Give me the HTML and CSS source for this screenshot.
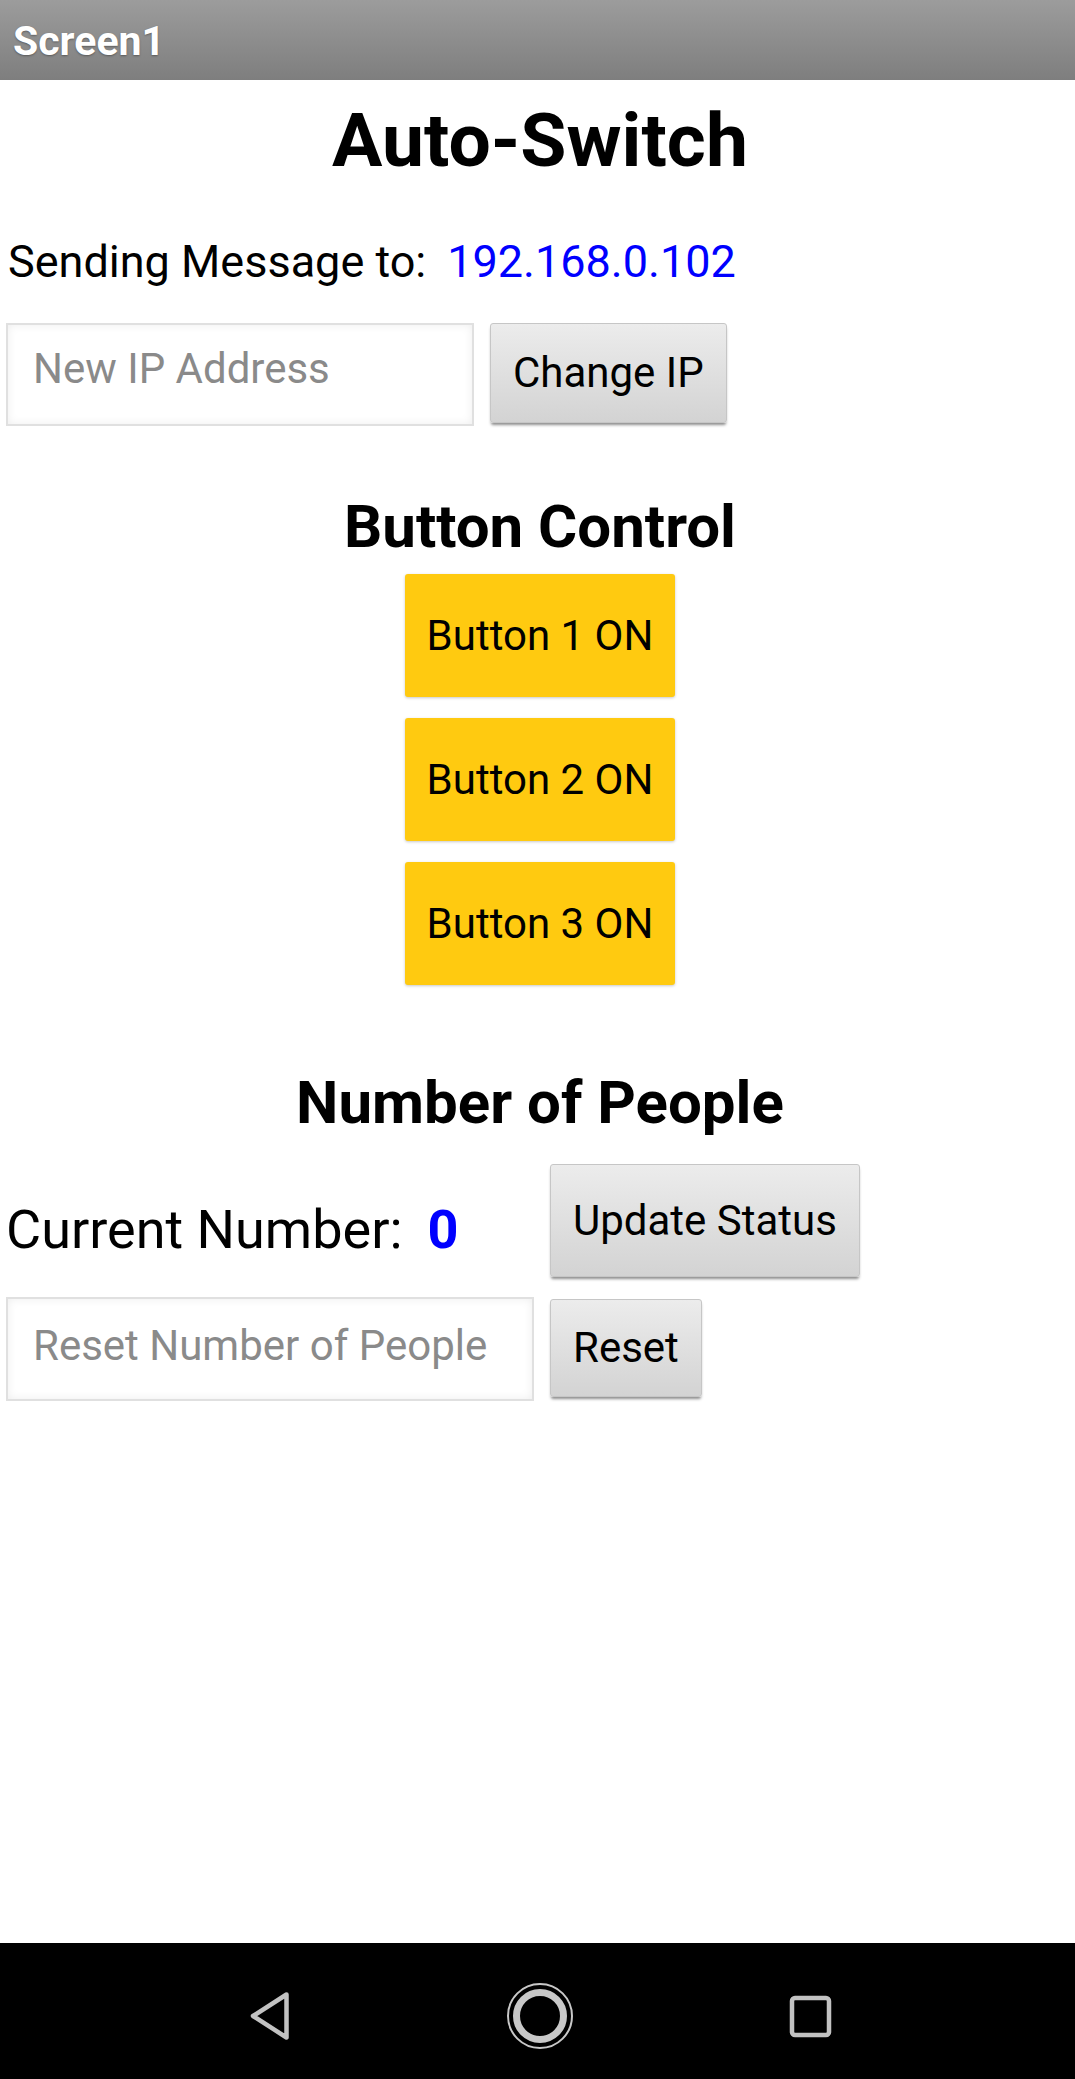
FILE: index.html
```html
<!DOCTYPE html>
<html lang="en">
<head>
<meta charset="utf-8">
<title>Screen1</title>
<link rel="stylesheet" href="styles.css">
</head>
<body>
<div class="screen">
  <header class="titlebar"><span class="titlebar-text">Screen1</span></header>
  <main class="content">
    <h1 class="title">Auto-Switch</h1>
    <div class="send-row">
      <span class="send-label">Sending Message to:</span>
      <span class="ip">192.168.0.102</span>
    </div>
    <div class="input-row ip-row">
      <input class="textbox tb-ip" type="text" placeholder="New IP Address">
      <button class="gray-btn btn-change">Change IP</button>
    </div>
    <h2 class="section section-control">Button Control</h2>
    <div class="yellow-stack">
      <button class="yellow-btn">Button 1 ON</button>
      <button class="yellow-btn">Button 2 ON</button>
      <button class="yellow-btn">Button 3 ON</button>
    </div>
    <h2 class="section section-people">Number of People</h2>
    <div class="count-row">
      <div class="count-label"><span class="count-text">Current Number:</span><span class="count">0</span></div>
      <button class="gray-btn btn-update">Update Status</button>
    </div>
    <div class="input-row reset-row">
      <input class="textbox tb-reset" type="text" placeholder="Reset Number of People">
      <button class="gray-btn btn-reset">Reset</button>
    </div>
    <div class="spacer"></div>
  </main>
  <nav class="navbar">
    <div class="nav-cell">
      <svg class="nav-icon" width="60" height="60" viewBox="0 0 60 60">
        <path d="M46.5 8.5 L13 30 L46.5 51.5 Z" fill="none" stroke="#c2c2c2" stroke-width="4.5" stroke-linejoin="round"/>
      </svg>
    </div>
    <div class="nav-cell">
      <svg class="nav-icon" width="72" height="72" viewBox="0 0 72 72">
        <circle cx="36" cy="36" r="32" fill="none" stroke="#c8c8c8" stroke-width="2"/>
        <circle cx="36" cy="36" r="23.5" fill="none" stroke="#c8c8c8" stroke-width="7"/>
      </svg>
    </div>
    <div class="nav-cell">
      <svg class="nav-icon" width="60" height="60" viewBox="0 0 60 60">
        <rect x="12" y="12" width="37" height="37" rx="3" fill="none" stroke="#c2c2c2" stroke-width="4.5"/>
      </svg>
    </div>
  </nav>
</div>
</body>
</html>
```

FILE: styles.css
```css
html, body {
  margin: 0;
  padding: 0;
  background: #ffffff;
}

body {
  font-family: Roboto, "Liberation Sans", Arial, sans-serif;
  color: #000000;
}

.screen {
  display: flex;
  flex-direction: column;
  min-height: 2079px;
  width: 1075px;
}

.titlebar {
  height: 80px;
  display: flex;
  align-items: center;
  padding-left: 13px;
  background: linear-gradient(to bottom, #9c9c9c 0%, #7e7e7e 100%);
  box-sizing: border-box;
}

.titlebar-text {
  color: #ffffff;
  font-size: 41px;
  font-weight: 700;
  line-height: 48px;
  text-shadow: 0 1px 2px rgba(0, 0, 0, 0.35);
  margin-top: 2px;
}

.content {
  flex: 1;
  display: flex;
  flex-direction: column;
  padding: 0 1px 0 6px;
}

.title {
  margin: 16px 0 0;
  font-size: 75px;
  font-weight: 700;
  line-height: 88px;
  text-align: center;
}

.send-row {
  margin-top: 52px;
  display: flex;
  align-items: baseline;
  font-size: 45px;
  line-height: 52px;
  padding-left: 2px;
}

.ip {
  color: #0000ff;
  margin-left: 21px;
}

.input-row {
  display: flex;
  align-items: flex-start;
}

.ip-row {
  margin-top: 35px;
}

.textbox {
  box-sizing: border-box;
  border: 2px solid #e0e0e0;
  background: #ffffff;
  box-shadow: inset 0 0 10px rgba(0, 0, 0, 0.07);
  font-family: Roboto, "Liberation Sans", Arial, sans-serif;
  font-size: 42px;
  color: #000;
  padding: 0 0 0 25px;
  margin: 0;
  outline: none;
  border-radius: 0;
}

.textbox::placeholder {
  color: #8a8a8a;
  opacity: 1;
}

.tb-ip {
  width: 468px;
  height: 103px;
  padding-bottom: 12px;
}

.tb-reset {
  width: 528px;
  height: 104px;
  padding-bottom: 7px;
}

.gray-btn {
  font-family: Roboto, "Liberation Sans", Arial, sans-serif;
  font-size: 42px;
  color: #000000;
  background: linear-gradient(to bottom, #ececec 0%, #d3d3d3 100%);
  border: 1px solid #c6c6c6;
  border-radius: 3px;
  box-shadow: 0 3px 3px -1px rgba(0, 0, 0, 0.45);
  padding: 0 22px;
  margin: 0 0 0 16px;
  box-sizing: border-box;
  line-height: 1;
}

.btn-change {
  height: 100px;
}

.section {
  margin: 0;
  font-size: 60px;
  font-weight: 700;
  line-height: 70px;
  text-align: center;
}

.section-control {
  margin-top: 66px;
}

.yellow-stack {
  margin-top: 12px;
  display: flex;
  flex-direction: column;
  align-items: center;
  gap: 21px;
}

.yellow-btn {
  height: 123px;
  padding: 0 22px;
  font-family: Roboto, "Liberation Sans", Arial, sans-serif;
  font-size: 42px;
  color: #000000;
  background: #ffca10;
  border: none;
  border-radius: 3px;
  box-shadow: 0 1px 3px rgba(0, 0, 0, 0.22);
  line-height: 1;
}

.section-people {
  margin-top: 83px;
}

.count-row {
  margin-top: 26px;
  display: flex;
  align-items: flex-start;
}

.count-label {
  width: 528px;
  display: flex;
  align-items: baseline;
  margin-top: 34px;
  font-size: 54px;
  line-height: 63px;
  padding-left: 0;
  box-sizing: border-box;
}

.count {
  color: #0000ff;
  font-weight: 700;
  margin-left: 25px;
}

.btn-update {
  height: 113px;
}

.reset-row {
  margin-top: 20px;
}

.btn-reset {
  height: 98px;
  margin-top: 2px;
}

.spacer {
  flex: 1;
}

.navbar {
  height: 136px;
  background: #000000;
  display: grid;
  grid-template-columns: repeat(3, 270px);
  justify-content: center;
  align-items: center;
  padding: 10px 0 0 5px;
  box-sizing: border-box;
}

.nav-cell {
  display: flex;
  justify-content: center;
  align-items: center;
}

.nav-icon {
  display: block;
}
```
